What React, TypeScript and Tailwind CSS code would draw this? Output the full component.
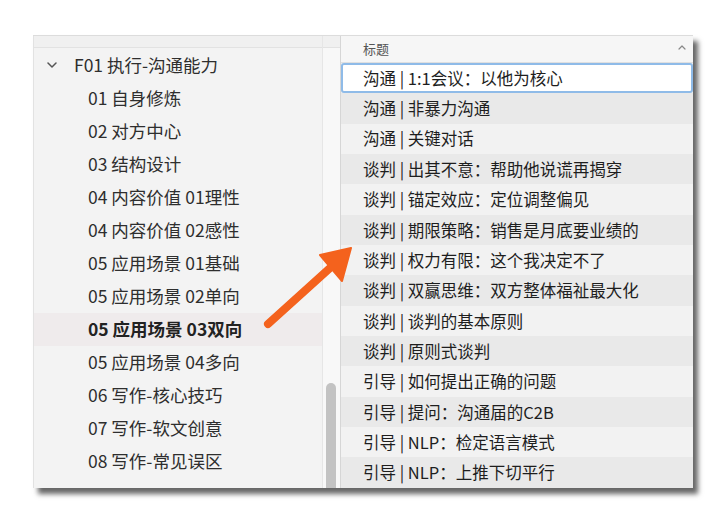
import React from "react";

const tree = [
  "01 自身修炼",
  "02 对方中心",
  "03 结构设计",
  "04 内容价值 01理性",
  "04 内容价值 02感性",
  "05 应用场景 01基础",
  "05 应用场景 02单向",
  "05 应用场景 03双向",
  "05 应用场景 04多向",
  "06 写作-核心技巧",
  "07 写作-软文创意",
  "08 写作-常见误区",
];

const rows = [
  "沟通 | 1:1会议：以他为核心",
  "沟通 | 非暴力沟通",
  "沟通 | 关键对话",
  "谈判 | 出其不意：帮助他说谎再揭穿",
  "谈判 | 锚定效应：定位调整偏见",
  "谈判 | 期限策略：销售是月底要业绩的",
  "谈判 | 权力有限：这个我决定不了",
  "谈判 | 双赢思维：双方整体福祉最大化",
  "谈判 | 谈判的基本原则",
  "谈判 | 原则式谈判",
  "引导 | 如何提出正确的问题",
  "引导 | 提问：沟通届的C2B",
  "引导 | NLP：检定语言模式",
  "引导 | NLP：上推下切平行",
];

export default function App() {
  return (
    <div
      className="relative w-[720px] h-[525px] bg-white overflow-hidden pt-[35px] pl-[33px]"
      style={{ fontFamily: '"Noto Sans CJK SC", "Noto Sans", sans-serif' }}
    >
      <div className="flex w-[660px] h-[453px] border-t border-[#dcdcdc] shadow-[5px_6px_5px_rgba(0,0,0,0.6)] bg-[#f3f3f3]">
        {/* Left panel */}
        <div className="flex w-[289px] flex-col bg-[#f3f3f3] border-l border-[#e2e2e2]">
          <div className="h-[12px] shrink-0 bg-[#f0f0f0] border-b border-[#e2e2e2]" />
          <div className="flex flex-col pt-[1px] text-[17.5px] text-[#2e2e2e]">
            <div className="flex h-[33px] items-center">
              <svg width="10" height="6" viewBox="0 0 10 6" className="ml-[13px] mr-[17px] mt-[-2px]">
                <polyline points="1,1 5,5 9,1" fill="none" stroke="#555" strokeWidth="1.5" strokeLinecap="round" strokeLinejoin="round" />
              </svg>
              <span>F01 执行-沟通能力</span>
            </div>
            {tree.map((t, i) => (
              <div
                key={i}
                className={
                  "flex h-[33px] items-center pl-[54px] " +
                  (i === 7 ? "bg-[#efebec] font-bold text-[#222]" : "")
                }
              >
                {t}
              </div>
            ))}
          </div>
        </div>
        {/* Scrollbar column */}
        <div className="flex w-[18px] flex-col border-l border-[#e6e6e6] bg-[#f8f8f8]">
          <div className="h-[12px] shrink-0 border-b border-[#e2e2e2] bg-[#f0f0f0]" />
          <div className="flex-1 flex flex-col justify-end pl-[3px]">
            <div className="h-[105px] w-[10px] rounded-t-full bg-[#c3c3c3]" />
          </div>
        </div>
        {/* Right panel */}
        <div className="flex flex-1 flex-col border-l border-[#d6d6d6] bg-[#f0f0f0]">
          <div className="flex h-[27px] shrink-0 items-center justify-between border-b border-[#e0e0e0] bg-[#f6f6f6] pl-[22px] pr-[7px]">
            <span className="text-[13px] text-[#555]">标题</span>
            <svg width="8" height="5" viewBox="0 0 8 5" className="mt-[-3px]">
              <polyline points="1,4 4,1 7,4" fill="none" stroke="#888" strokeWidth="1.2" strokeLinecap="round" strokeLinejoin="round" />
            </svg>
          </div>
          <div className="flex flex-col text-[16.5px] text-[#1e1e1e]">
            {rows.map((r, i) => (
              <div
                key={i}
                className={
                  "flex h-[30.35px] items-center " +
                  (i === 0
                    ? "border-2 border-[#8fbbe8] rounded-[3px] bg-white pl-[20px]"
                    : i % 2 === 1
                    ? "bg-[#e9e9e9] pl-[22px]"
                    : "bg-[#f2f2f2] pl-[22px]")
                }
              >
                {r}
              </div>
            ))}
          </div>
        </div>
      </div>
      {/* Orange arrow overlay */}
      <svg className="absolute left-0 top-0" width="720" height="525" viewBox="0 0 720 525">
        <line x1="268" y1="324" x2="330" y2="268" stroke="#f4621d" strokeWidth="8" strokeLinecap="round" />
        <polygon points="351,248 320,255 342,281" fill="#f4621d" stroke="#f4621d" strokeWidth="2" strokeLinejoin="round" />
      </svg>
    </div>
  );
}
